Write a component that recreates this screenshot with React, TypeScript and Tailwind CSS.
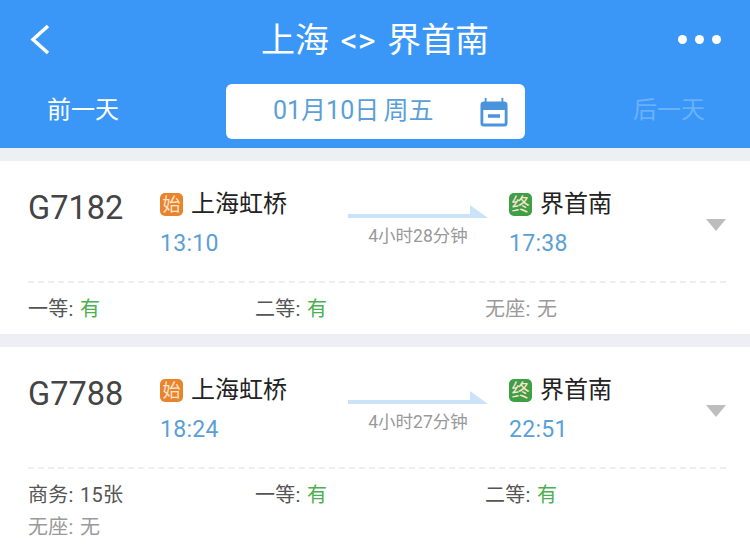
const font = { fontFamily: '"Roboto","Noto Sans CJK SC",sans-serif' };

function Seat({ label, value, state, w }: { label: string; value: string; state?: "ok" | "none" | "plain"; w: string }) {
  const labelColor = state === "none" ? "text-[#9a9a9a]" : "text-[#555555]";
  const valueColor = state === "ok" ? "text-[#4caf50]" : state === "none" ? "text-[#9a9a9a]" : "text-[#555555]";
  return (
    <div className={`${w} h-[32px] leading-[32px] text-[20px] tracking-[0.3px] [word-spacing:1px] whitespace-nowrap ${labelColor}`}>
      {label}: <span className={valueColor}>{value}</span>
    </div>
  );
}

function Station({ badge, color, name, time }: { badge: string; color: string; name: string; time: string }) {
  return (
    <div className="flex flex-col">
      <div className="flex items-center h-[32px]">
        <span className={`w-[23px] h-[23px] rounded-[5px] text-[#fde5cf] text-[18px] leading-[23px] text-center ${color}`}>{badge}</span>
        <span className="ml-2 text-[24px] leading-[32px] text-[#222222] whitespace-nowrap">{name}</span>
      </div>
      <div className="mt-[9px] text-[23px] leading-[30px] text-[#5b9fd6] tracking-[0.3px]">{time}</div>
    </div>
  );
}

function Train({ no, from, to, dur, dep, arr, seats, grow }: { no: string; from: string; to: string; dur: string; dep: string; arr: string; seats: React.ReactNode; grow?: boolean }) {
  return (
    <div className={`bg-white pl-7 pr-6 pt-[27px] ${grow ? "flex-1" : ""}`}>
      <div className="flex h-[95px] border-b-2 border-dashed border-[#eeeeee]">
        <div className="w-[132px] text-[32.5px] leading-[40px] text-[#444444]">{no}</div>
        <div className="w-[188px]">
          <Station badge="始" color="bg-[#e9842c]" name={from} time={dep} />
        </div>
        <div className="w-[140px] flex flex-col items-center mt-[14px]">
          <svg width="140" height="16" viewBox="0 0 140 16" className="block">
            <path d="M0 12V16H140L122 3V12Z" fill="#cbe3f8" />
          </svg>
          <div className="mt-[8px] text-[17.5px] leading-[20px] text-[#999999] whitespace-nowrap">{dur}</div>
        </div>
        <div className="ml-[21px] flex-1">
          <Station badge="终" color="bg-[#3f9f47]" name={to} time={arr} />
        </div>
        <svg width="20" height="12" viewBox="0 0 20 12" className="mt-[31px] block">
          <path d="M0 0H20L10 12Z" fill="#bdbdbd" />
        </svg>
      </div>
      {seats}
    </div>
  );
}

export default function App() {
  return (
    <div className="w-[750px] h-[553px] overflow-hidden flex flex-col bg-white" style={font}>
      <div className="bg-[#3a97f8] h-[148px] pl-7 pr-7 text-white">
        <div className="grid grid-cols-[1fr_auto_1fr] items-center h-[84px]">
          <svg width="24" height="32" viewBox="0 0 24 32" className="block -mt-[6px]">
            <path d="M20 3L5 16.5L20 30" fill="none" stroke="white" strokeWidth="3.5" />
          </svg>
          <div className="text-[34px] leading-[40px] -mt-[4px] whitespace-nowrap [word-spacing:3px]">上海 &lt;&gt; 界首南</div>
          <div className="flex gap-[8px] -mt-[5px] mr-[1px] justify-end">
            <span className="w-[9px] h-[9px] rounded-full bg-white" />
            <span className="w-[9px] h-[9px] rounded-full bg-white" />
            <span className="w-[9px] h-[9px] rounded-full bg-white" />
          </div>
        </div>
        <div className="flex items-start">
          <div className="w-[198px] pl-[19px] text-[24px] leading-[52px]">前一天</div>
          <div className="w-[299px] h-[55px] bg-white rounded-[6px] flex items-center pl-[47px] pr-[17px] justify-between">
            <span className="text-[25px] -mt-[2px] text-[#5a9fd8] whitespace-nowrap [word-spacing:-2px]">01月10日 周五</span>
            <svg width="28" height="30" viewBox="0 0 30 30" className="block mt-[1px]" preserveAspectRatio="none">
              <rect x="2" y="6" width="26" height="22" rx="2" fill="none" stroke="#4a94de" strokeWidth="3" />
              <path d="M2 6H28V13H2Z" fill="#4a94de" />
              <path d="M6 1V8M24 1V8" stroke="#4a94de" strokeWidth="2" />
              <path d="M8.5 19H21.5" stroke="#4a94de" strokeWidth="3.5" />
            </svg>
          </div>
          <div className="ml-[108px] text-[24px] leading-[52px] text-white/25 whitespace-nowrap">后一天</div>
        </div>
      </div>
      <div className="h-[13px] bg-[#edf0f2]" />
      <Train
        no="G7182"
        from="上海虹桥"
        to="界首南"
        dur="4小时28分钟"
        dep="13:10"
        arr="17:38"
        seats={
          <div className="flex h-[51px] pt-[10px]">
            <Seat w="w-[227px]" label="一等" value="有" state="ok" />
            <Seat w="w-[230px]" label="二等" value="有" state="ok" />
            <Seat w="w-[200px]" label="无座" value="无" state="none" />
          </div>
        }
      />
      <div className="h-[13px] bg-[#eeeff4]" />
      <Train
        grow
        no="G7788"
        from="上海虹桥"
        to="界首南"
        dur="4小时27分钟"
        dep="18:24"
        arr="22:51"
        seats={
          <div className="flex flex-wrap pt-[10px]">
            <Seat w="w-[227px]" label="商务" value="15张" state="plain" />
            <Seat w="w-[230px]" label="一等" value="有" state="ok" />
            <Seat w="w-[200px]" label="二等" value="有" state="ok" />
            <Seat w="w-[227px]" label="无座" value="无" state="none" />
          </div>
        }
      />
    </div>
  );
}
